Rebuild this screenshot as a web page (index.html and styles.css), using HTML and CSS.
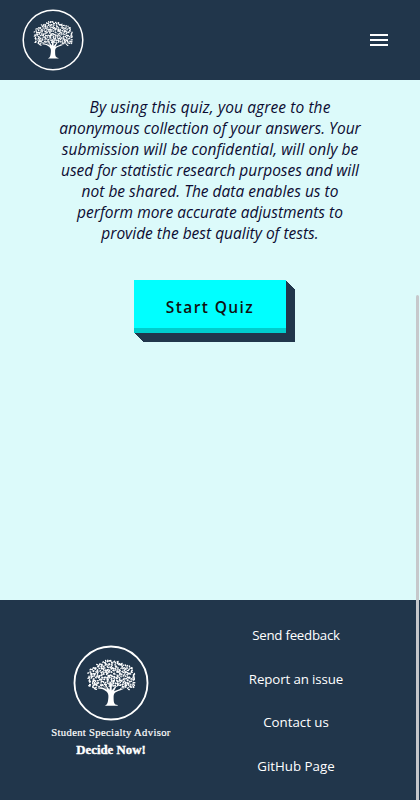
FILE: index.html
```html
<!DOCTYPE html>
<html lang="en">
<head>
<meta charset="utf-8">
<title>Student Specialty Advisor</title>
<link rel="stylesheet" href="styles.css">
</head>
<body>
<svg class="defs" aria-hidden="true">
  <symbol id="tree" viewBox="-51 -51 102 102">
    <circle r="49" fill="none" stroke="#fff" stroke-width="2.500"/>
    <g id="leaves" fill="#fff"></g>
    <path fill="#fff" d="M-8.500 30.500C-4 29 -4 24-3.500 19C-3 14-5 11-12 8L-19 7L-11 6L-5 9L-8 1L-2 9L-1 0L1 0L1 10L6 4L7 5L4 11L12 8L19 7L12 10C5 12 3.500 14 3.500 19C3.500 26 4 29 9 29.500V30.500Z"/>
    <path fill="none" stroke="#fff" stroke-width="1" d="M-5 9L-14 0M0 5L-5-8M1 5L6-8M6 6L15-3M-12 7L-23 1M12 8L23 1"/>
  </symbol>
</svg>
<header class="header">
  <svg class="header-logo"><use href="#tree"/></svg>
  <button class="menu" aria-label="Menu"><i></i><i></i><i></i></button>
</header>
<main class="main">
  <p class="terms">
    <span class="looser">By using this quiz, you agree to the</span>
    <span>anonymous collection of your answers. Your</span>
    <span class="loose">submission will be confidential, will only be</span>
    <span class="tight">used for statistic research purposes and will</span>
    <span>not be shared. The data enables us to</span>
    <span>perform more accurate adjustments to</span>
    <span>provide the best quality of tests.</span>
  </p>
  <button class="start">Start Quiz</button>
</main>
<footer class="footer">
  <div class="brand">
    <svg class="footer-logo"><use href="#tree"/></svg>
    <div class="brand-name">Student Specialty Advisor</div>
    <div class="slogan">Decide Now!</div>
  </div>
  <nav class="links">
    <a class="narrow">Send feedback</a>
    <a class="snug">Report an issue</a>
    <a>Contact us</a>
    <a>GitHub Page</a>
  </nav>
</footer>
<div class="scrollbar"></div>
<script src="leaves.js"></script>
</body>
</html>
```
FILE: leaves.js
```js
// Scatter small leaves over the lobes of the tree's canopy.
const lobes = [[0, -17, 21, 13.5], [-18, -10, 13, 15], [18, -10, 14, 15], [-22, 0, 9, 9], [23, 0, 9, 9], [0, -7, 19, 12]];
const group = document.getElementById("leaves");
let n = 0;
for (let y = -31; y < 11; y += 2.5) {
  for (let x = -33; x < 34; x += 2.7) {
    n++;
    const px = x + Math.sin(n * n * 12.9) * 1.2;
    const py = y + Math.sin(n * n * 7.3) * 1.2;
    if (!lobes.some(([cx, cy, rx, ry]) => ((px - cx) / rx) ** 2 + ((py - cy) / ry) ** 2 < 1)) continue;
    const leaf = document.createElementNS("http://www.w3.org/2000/svg", "ellipse");
    leaf.setAttribute("rx", 1.55);
    leaf.setAttribute("ry", 1);
    leaf.setAttribute("transform", `translate(${px.toFixed(2)} ${py.toFixed(2)}) rotate(${(n * 67) % 180})`);
    group.append(leaf);
  }
}
```
FILE: styles.css
```css
* { box-sizing: border-box; }
body {
  margin: 0;
  height: 800px;
  display: flex;
  flex-direction: column;
  overflow: hidden;
  background: #dcfafa;
  font-family: "Open Sans", "Noto Sans", sans-serif;
}
.defs { position: absolute; width: 0; height: 0; }
.header {
  height: 80px;
  flex: none;
  display: flex;
  align-items: center;
  justify-content: space-between;
  padding: 0 32px 0 22px;
  background: #21364b;
}
.header-logo { width: 62px; height: 62px; }
.menu {
  display: flex;
  flex-direction: column;
  gap: 3px;
  width: 18px;
  padding: 0;
  border: 0;
  background: none;
}
.menu i { height: 2px; background: #fff; }
.main {
  height: 520px;
  display: flex;
  flex-direction: column;
  align-items: center;
  padding-top: 17px;
}
.terms {
  margin: 0 0 36px;
  text-align: center;
  font-size: 15.5px;
  font-style: italic;
  line-height: 21px;
  color: #0c0c32;
}
.terms span { display: block; white-space: nowrap; }
.terms .looser { letter-spacing: .11px; }
.terms .loose { letter-spacing: .075px; }
.terms .tight { letter-spacing: -.04px; }
.start {
  width: 152px;
  height: 53px;
  padding: 6px 0 0;
  border: 0;
  border-bottom: 5px solid #00cdcd;
  background: #0ff;
  color: #111;
  font: 600 15.5px/24px "Open Sans", sans-serif;
  letter-spacing: 1.4px;
  box-shadow: 1px 1px #21364b, 2px 2px #21364b, 3px 3px #21364b, 4px 4px #21364b, 5px 5px #21364b, 6px 6px #21364b, 7px 7px #21364b, 8px 8px #21364b, 9px 9px #21364b;
}
.footer {
  height: 200px;
  display: flex;
  background: #21364b;
  color: #fff;
}
.brand {
  width: 222px;
  display: flex;
  flex-direction: column;
  align-items: center;
  padding-top: 45px;
}
.footer-logo { width: 76px; height: 76px; }
.brand-name {
  margin-top: 5px;
  font: 10.6px/14px "Liberation Serif", serif;
  letter-spacing: .35px;
  white-space: nowrap;
  -webkit-text-stroke: .2px #fff;
}
.slogan {
  margin-top: 3px;
  font: bold 12.8px/14px "Liberation Serif", serif;
  -webkit-text-stroke: .4px #fff;
}
.links {
  width: 148px;
  display: flex;
  flex-direction: column;
  align-items: center;
  gap: 23.600px;
  padding-top: 25px;
  font-size: 13.3px;
  line-height: 20px;
}
.narrow { letter-spacing: -.25px; }
.snug { letter-spacing: -.12px; }
.scrollbar {
  position: fixed;
  left: 415.5px;
  top: 295px;
  width: 3px;
  height: 520px;
  border-radius: 2px;
  background: #c6c8cb;
}
```
